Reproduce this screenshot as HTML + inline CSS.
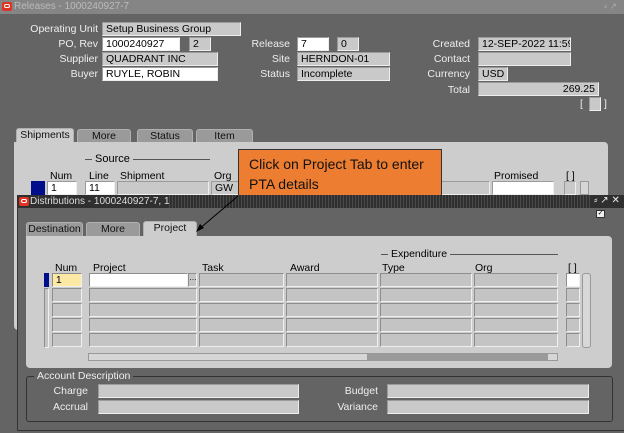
<!DOCTYPE html><html><head><style>
*{margin:0;padding:0;box-sizing:border-box}
body{width:624px;height:433px;overflow:hidden;background:#646464;font-family:"Liberation Sans",Arial,sans-serif;font-size:10.5px;color:#000;position:relative}
.a{position:absolute}
.l{position:absolute;color:#eee;text-align:right;white-space:nowrap}
.f{position:absolute;height:14px;background:#c9c9c9;border:1px solid #9a9a9a;border-right-color:#eee;border-bottom-color:#eee;padding:0 3px;line-height:12px;white-space:nowrap;overflow:hidden}
.w{background:#fff}
.h{position:absolute;color:#000;white-space:nowrap}
.tab{position:absolute;height:14px;background:#9a9a9a;border:1px solid #b0b0b0;border-bottom:none;border-radius:3px 3px 0 0;text-align:center;line-height:13px;color:#111}
.tab.on{background:#cdcdcd}
.c{position:absolute;height:14px;background:#c4c4c4;border:1px solid #8d8d8d;border-right-color:#f0f0f0;border-bottom-color:#f0f0f0}
</style></head><body>
<div class="a" style="left:0;top:0;width:624px;height:14px;background:#858585"></div>
<div class="a" style="left:2px;top:2px;width:10px;height:9px;background:#d32;border-radius:2px"></div>
<div class="a" style="left:4px;top:4px;width:6px;height:4px;border:1px solid #fff;border-radius:2px"></div>
<div class="a" style="left:14px;top:1px;color:#bbb;font-size:10px">Releases - 1000240927-7</div>
<div class="a" style="left:604px;top:1px;color:#aaa;font-size:9px">⸗ ↗</div>

<div class="l" style="right:526px;top:23px">Operating Unit</div>
<div class="f" style="left:102px;top:22px;width:139px">Setup Business Group</div>
<div class="l" style="right:526px;top:38px">PO, Rev</div>
<div class="f w" style="left:102px;top:37px;width:78px">1000240927</div>
<div class="f" style="left:189px;top:37px;width:22px">2</div>
<div class="l" style="right:334px;top:38px">Release</div>
<div class="f w" style="left:297px;top:37px;width:32px">7</div>
<div class="f" style="left:337px;top:37px;width:22px">0</div>
<div class="l" style="right:154px;top:38px">Created</div>
<div class="f" style="left:478px;top:37px;width:93px">12-SEP-2022 11:59</div>
<div class="l" style="right:526px;top:53px">Supplier</div>
<div class="f" style="left:102px;top:52px;width:116px">QUADRANT INC</div>
<div class="l" style="right:334px;top:53px">Site</div>
<div class="f" style="left:297px;top:52px;width:93px">HERNDON-01</div>
<div class="l" style="right:154px;top:53px">Contact</div>
<div class="f" style="left:478px;top:52px;width:93px"></div>
<div class="l" style="right:526px;top:68px">Buyer</div>
<div class="f w" style="left:102px;top:67px;width:116px">RUYLE, ROBIN</div>
<div class="l" style="right:334px;top:68px">Status</div>
<div class="f" style="left:297px;top:67px;width:93px">Incomplete</div>
<div class="l" style="right:154px;top:68px">Currency</div>
<div class="f" style="left:478px;top:67px;width:30px">USD</div>
<div class="l" style="right:154px;top:84px">Total</div>
<div class="f" style="left:478px;top:82px;width:121px;text-align:right">269.25</div>
<div class="l" style="left:580px;top:98px;color:#eee">[</div>
<div class="f" style="left:589px;top:97px;width:12px;height:14px"></div>
<div class="l" style="left:604px;top:98px;color:#eee">]</div>

<div class="tab on" style="left:16px;top:128px;width:58px;height:15px">Shipments</div>
<div class="tab" style="left:77px;top:129px;width:54px">More</div>
<div class="tab" style="left:137px;top:129px;width:56px">Status</div>
<div class="tab" style="left:196px;top:129px;width:57px">Item</div>
<div class="a" style="left:14px;top:142px;width:594px;height:188px;background:#cdcdcd;border-radius:0 4px 4px 4px"></div>
<div class="a" style="left:85px;top:159px;width:125px;border-top:1px solid #555"></div>
<div class="h" style="left:92px;top:153px;background:#cdcdcd;padding:0 3px;font-size:11px">Source</div>
<div class="h" style="left:50px;top:170px">Num</div>
<div class="h" style="left:89px;top:170px">Line</div>
<div class="h" style="left:120px;top:170px">Shipment</div>
<div class="h" style="left:214px;top:170px">Org</div>
<div class="h" style="left:494px;top:170px">Promised</div>
<div class="h" style="left:566px;top:170px">[ ]</div>
<div class="a" style="left:31px;top:181px;width:14px;height:14px;background:#000e8c"></div>
<div class="f w" style="left:47px;top:181px;width:30px">1</div>
<div class="f w" style="left:85px;top:181px;width:30px">11</div>
<div class="f" style="left:117px;top:181px;width:92px"></div>
<div class="f" style="left:211px;top:181px;width:30px">GW</div>
<div class="f" style="left:440px;top:181px;width:50px"></div>
<div class="f w" style="left:492px;top:181px;width:62px"></div>
<div class="f" style="left:564px;top:181px;width:12px"></div>
<div class="a" style="left:580px;top:181px;width:9px;height:14px;background:#d6d6d6;border:1px solid #999"></div>

<div class="a" style="left:238px;top:149px;width:204px;height:47px;background:#ed7d31;border:1px solid #333;padding:4px 0 0 10px;font-size:14px;line-height:20px;color:#111">Click on Project Tab to enter<br>PTA details</div>

<div class="a" style="left:17px;top:208px;width:607px;height:223px;background:#646464;border-left:1px solid #333;border-bottom:1px solid #333"></div>
<div class="a" style="left:17px;top:195px;width:607px;height:13px;background:repeating-linear-gradient(90deg,#2f2f2f 0 2px,#4a4a4a 2px 3px)"></div>
<div class="a" style="left:17px;top:195px;width:150px;height:13px;background:#2f2f2f"></div>
<div class="a" style="left:19px;top:197px;width:10px;height:9px;background:#d32;border-radius:2px"></div>
<div class="a" style="left:21px;top:199px;width:6px;height:4px;border:1px solid #fff;border-radius:2px"></div>
<div class="a" style="left:30px;top:196px;color:#ddd;font-size:10px">Distributions - 1000240927-7, 1</div>
<div class="a" style="left:590px;top:195px;width:34px;height:13px;background:#2f2f2f;color:#eee;font-size:10px;text-align:center">⸗ ↗ ✕</div>
<div class="a" style="left:596px;top:210px;width:9px;height:8px;background:#eee;border:1px solid #333;font-size:7px;line-height:6px;text-align:center">✓</div>

<div class="tab" style="left:26px;top:222px;width:57px">Destination</div>
<div class="tab" style="left:86px;top:222px;width:54px">More</div>
<div class="tab on" style="left:143px;top:221px;width:54px;height:16px">Project</div>
<div class="a" style="left:26px;top:236px;width:586px;height:132px;background:#cdcdcd;border-radius:0 4px 4px 4px"></div>

<svg class="a" style="left:0;top:0" width="624" height="433"><line x1="238" y1="196" x2="198" y2="230" stroke="#000" stroke-width="1"/><polygon points="196,232 200,224 204,228" fill="#000"/></svg>

<div class="a" style="left:381px;top:254px;width:177px;border-top:1px solid #555"></div>
<div class="h" style="left:388px;top:248px;background:#cdcdcd;padding:0 3px">Expenditure</div>
<div class="h" style="left:55px;top:262px">Num</div>
<div class="h" style="left:93px;top:262px">Project</div>
<div class="h" style="left:202px;top:262px">Task</div>
<div class="h" style="left:290px;top:262px">Award</div>
<div class="h" style="left:382px;top:262px">Type</div>
<div class="h" style="left:475px;top:262px">Org</div>
<div class="h" style="left:568px;top:262px">[ ]</div>

<div class="a" style="left:44px;top:273px;width:5px;height:14px;background:#000e8c"></div>
<div class="c" style="left:52px;top:273px;width:30px;background:#fde9a6">&nbsp;1</div>
<div class="c" style="left:89px;top:273px;width:99px;background:#fff"></div>
<div class="c" style="left:188px;top:273px;width:9px;font-size:8px;line-height:8px">…</div>
<div class="c" style="left:199px;top:273px;width:85px"></div>
<div class="c" style="left:286px;top:273px;width:92px"></div>
<div class="c" style="left:380px;top:273px;width:92px"></div>
<div class="c" style="left:474px;top:273px;width:84px"></div>
<div class="c" style="left:566px;top:273px;width:14px;background:#fff"></div>
<div class="c" style="left:44px;top:288px;width:5px;height:60px"></div>
<div class="c" style="left:52px;top:288px;width:30px"></div><div class="c" style="left:89px;top:288px;width:108px"></div><div class="c" style="left:199px;top:288px;width:85px"></div><div class="c" style="left:286px;top:288px;width:92px"></div><div class="c" style="left:380px;top:288px;width:92px"></div><div class="c" style="left:474px;top:288px;width:84px"></div><div class="c" style="left:566px;top:288px;width:14px"></div>
<div class="c" style="left:52px;top:303px;width:30px"></div><div class="c" style="left:89px;top:303px;width:108px"></div><div class="c" style="left:199px;top:303px;width:85px"></div><div class="c" style="left:286px;top:303px;width:92px"></div><div class="c" style="left:380px;top:303px;width:92px"></div><div class="c" style="left:474px;top:303px;width:84px"></div><div class="c" style="left:566px;top:303px;width:14px"></div>
<div class="c" style="left:52px;top:318px;width:30px"></div><div class="c" style="left:89px;top:318px;width:108px"></div><div class="c" style="left:199px;top:318px;width:85px"></div><div class="c" style="left:286px;top:318px;width:92px"></div><div class="c" style="left:380px;top:318px;width:92px"></div><div class="c" style="left:474px;top:318px;width:84px"></div><div class="c" style="left:566px;top:318px;width:14px"></div>
<div class="c" style="left:52px;top:333px;width:30px"></div><div class="c" style="left:89px;top:333px;width:108px"></div><div class="c" style="left:199px;top:333px;width:85px"></div><div class="c" style="left:286px;top:333px;width:92px"></div><div class="c" style="left:380px;top:333px;width:92px"></div><div class="c" style="left:474px;top:333px;width:84px"></div><div class="c" style="left:566px;top:333px;width:14px"></div>
<div class="a" style="left:582px;top:273px;width:9px;height:75px;background:#d8d8d8;border:1px solid #999;border-radius:3px"></div>
<div class="a" style="left:88px;top:353px;width:470px;height:8px;background:#d6d6d6;border:1px solid #999"></div>
<div class="a" style="left:367px;top:354px;width:181px;height:6px;background:#9a9a9a"></div>

<div class="a" style="left:26px;top:376px;width:587px;height:46px;border:1px solid #333;border-radius:3px"></div>
<div class="a" style="left:34px;top:370px;background:#646464;color:#eee;padding:0 3px;font-size:10.5px">Account Description</div>
<div class="l" style="right:536px;top:385px">Charge</div>
<div class="f" style="left:98px;top:384px;width:201px"></div>
<div class="l" style="right:536px;top:401px">Accrual</div>
<div class="f" style="left:98px;top:400px;width:201px"></div>
<div class="l" style="right:246px;top:385px">Budget</div>
<div class="f" style="left:387px;top:384px;width:202px"></div>
<div class="l" style="right:246px;top:401px">Variance</div>
<div class="f" style="left:387px;top:400px;width:202px"></div>
</body></html>
